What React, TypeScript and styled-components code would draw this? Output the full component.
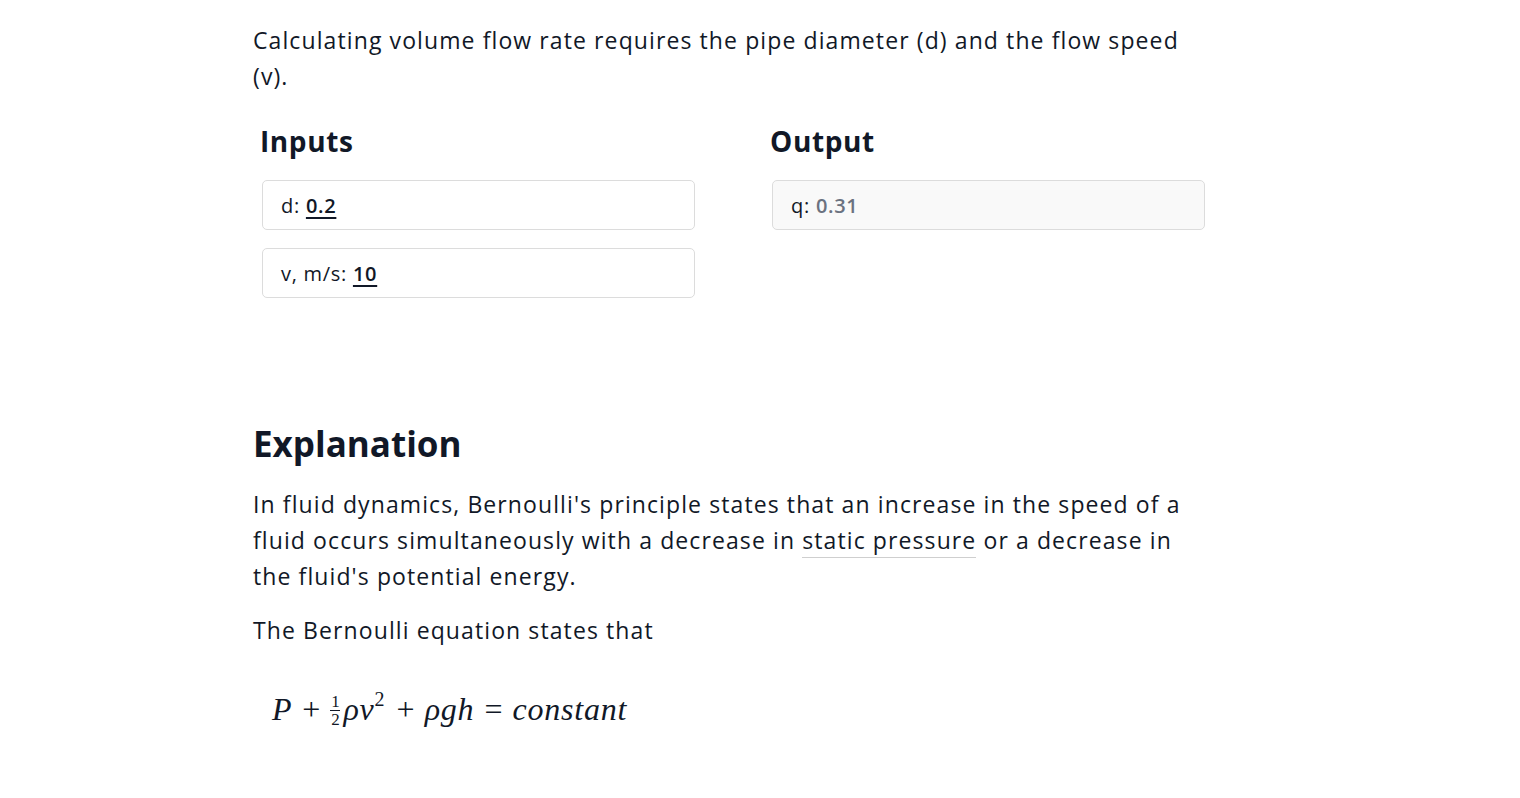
import { createGlobalStyle, styled } from "styled-components";

const GlobalStyle = createGlobalStyle`
  body {
    margin: 0;
    background: #ffffff;
    font-family: "Open Sans", "Noto Sans", sans-serif;
    color: #111827;
  }
`;

const inputs = [
  { label: "d", value: "0.2" },
  { label: "v, m/s", value: "10" },
];

const outputs = [{ label: "q", value: "0.31" }];

export default function App() {
  return (
    <>
      <GlobalStyle />
      <Page>
        <Article>
          <Paragraph>
            Calculating volume flow rate requires the pipe diameter (d) and the
            flow speed (v).
          </Paragraph>
          <Calculator>
            <Column>
              <ColumnTitle>Inputs</ColumnTitle>
              {inputs.map((item) => (
                <Field key={item.label}>
                  {item.label}: <InputValue>{item.value}</InputValue>
                </Field>
              ))}
            </Column>
            <Column>
              <ColumnTitle>Output</ColumnTitle>
              {outputs.map((item) => (
                <Field key={item.label} $readonly>
                  {item.label}: <OutputValue>{item.value}</OutputValue>
                </Field>
              ))}
            </Column>
          </Calculator>
          <SectionTitle>Explanation</SectionTitle>
          <Paragraph>
            In fluid dynamics, Bernoulli's principle states that an increase in
            the speed of a fluid occurs simultaneously with a decrease in{" "}
            <Term>static pressure</Term> or a decrease in the fluid's potential
            energy.
          </Paragraph>
          <Paragraph>The Bernoulli equation states that</Paragraph>
          <Formula>
            <Var>P</Var>
            <Op>+</Op>
            <Frac>
              <span>1</span>
              <FracLine />
              <span>2</span>
            </Frac>
            <Var>ρv</Var>
            <Sup>2</Sup>
            <Op>+</Op>
            <Var>ρgh</Var>
            <Op>=</Op>
            <Var>constant</Var>
          </Formula>
        </Article>
      </Page>
    </>
  );
}

const Page = styled.div`
  padding: 22px 0 40px 253px;
`;

const Article = styled.main`
  width: 952px;
`;

const Paragraph = styled.p`
  margin: 0 0 18px;
  font-size: 23px;
  line-height: 36px;
  letter-spacing: 1.1px;
  color: #111827;
`;

const Calculator = styled.div`
  display: grid;
  grid-template-columns: 433px 433px;
  column-gap: 77px;
  padding: 11px 0 0 9px;
  margin-bottom: 124px;
`;

const Column = styled.div`
  display: flex;
  flex-direction: column;
  gap: 18px;
`;

const ColumnTitle = styled.h3`
  margin: 0 0 3px -2px;
  font-size: 28px;
  line-height: 36px;
  font-weight: 700;
  letter-spacing: 0.6px;
  color: #111827;
`;

const Field = styled.div<{ $readonly?: boolean }>`
  height: 48px;
  display: flex;
  align-items: center;
  gap: 6px;
  padding: 0 18px;
  border: 1px solid #dcdcdc;
  border-radius: 5px;
  background: ${({ $readonly }) => ($readonly ? "#f9f9f9" : "#ffffff")};
  font-size: 20px;
  letter-spacing: 0.7px;
  color: #111827;
`;

const InputValue = styled.span`
  text-decoration: underline;
  text-underline-offset: 4px;
  text-decoration-thickness: 2px;
  font-weight: 600;
`;

const OutputValue = styled.span`
  color: #6b7280;
  font-weight: 600;
`;

const SectionTitle = styled.h2`
  margin: 0 0 20px;
  font-size: 35px;
  line-height: 44px;
  font-weight: 700;
  color: #111827;
`;

const Term = styled.span`
  border-bottom: 1px solid #cfcfcf;
  padding-bottom: 1px;
`;

const Formula = styled.div`
  padding: 23px 0 0 19px;
  font-family: "Liberation Serif", "DejaVu Serif", serif;
  font-size: 32px;
  line-height: 40px;
  color: #111827;
`;

const Var = styled.span`
  font-style: italic;
  letter-spacing: 0.8px;
`;

const Op = styled.span`
  padding: 0 10px;
`;

const Sup = styled.sup`
  font-size: 20px;
  line-height: 0;
  vertical-align: 14px;
  margin-right: 2px;
`;

const Frac = styled.span`
  display: inline-flex;
  flex-direction: column;
  align-items: center;
  vertical-align: 13px;
  font-size: 17px;
  line-height: 12px;
  margin-right: 3px;
`;

const FracLine = styled.span`
  width: 10px;
  height: 1px;
  background: #111827;
  margin: 2px 0 3px;
`;
